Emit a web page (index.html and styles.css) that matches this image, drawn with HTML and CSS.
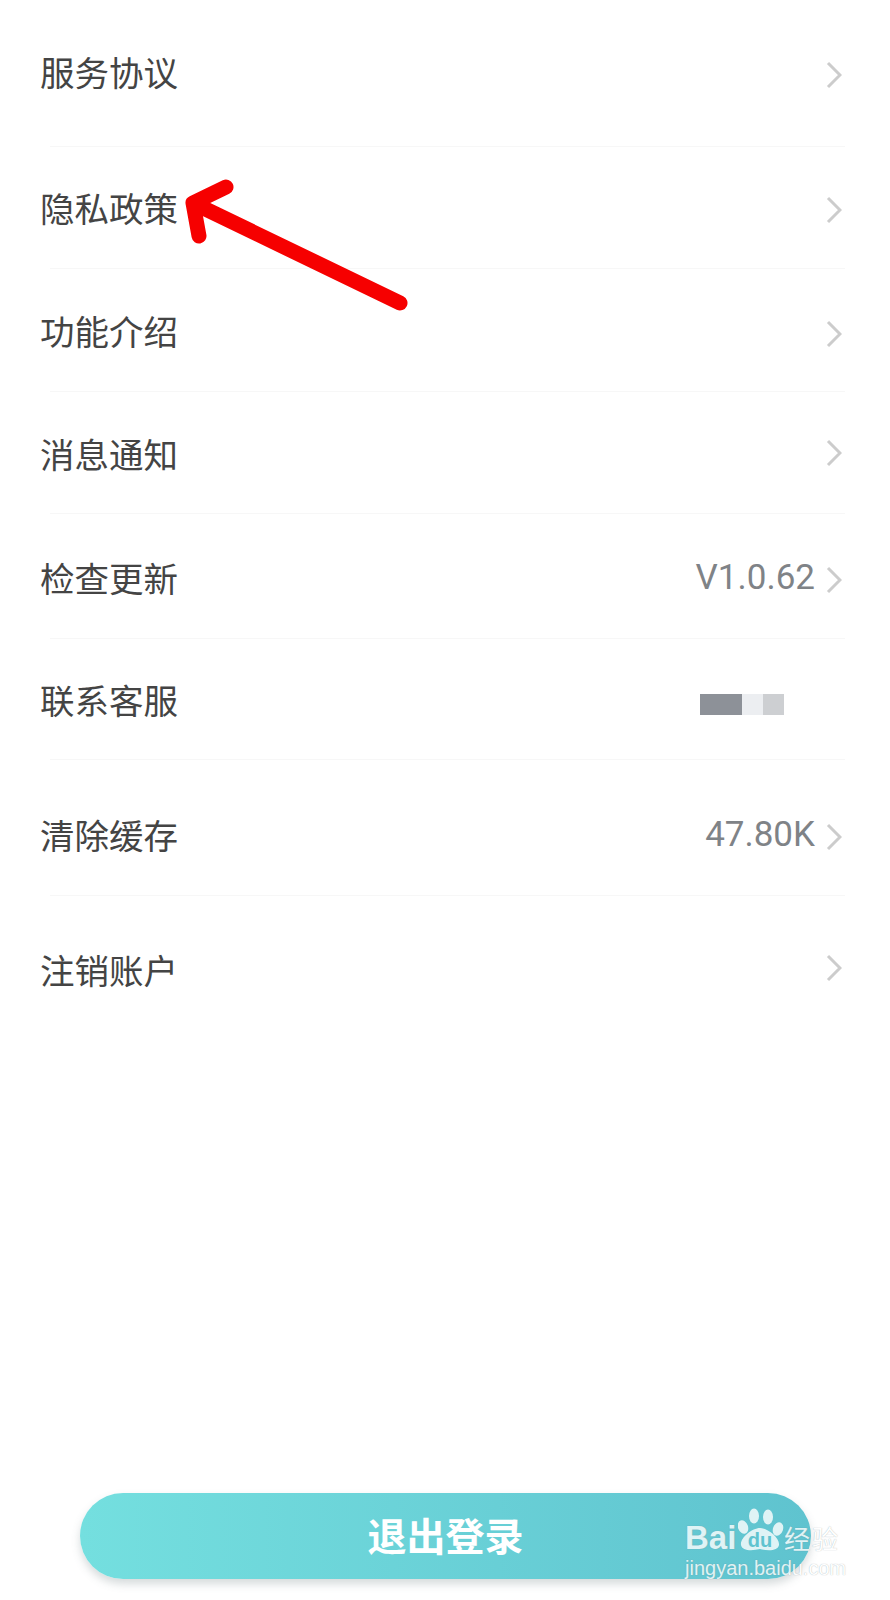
FILE: index.html
```html
<!DOCTYPE html>
<html lang="zh-CN">
<head>
    <meta charset="UTF-8">
    <meta name="viewport" content="width=device-width, initial-scale=1.0">
    <title>设置</title>
    <link rel="stylesheet" href="styles.css">
</head>
<body>

    <!-- Settings list -->
    <div class="list">
        <div class="row row-1">
            <span class="label">服务协议</span>
            <svg class="chevron" viewBox="0 0 16 28"><path d="M2 2L14 14L2 26"/></svg>
        </div>
        <div class="divider"></div>
        <div class="row row-2">
            <span class="label">隐私政策</span>
            <svg class="chevron" viewBox="0 0 16 28"><path d="M2 2L14 14L2 26"/></svg>
        </div>
        <div class="divider"></div>
        <div class="row row-3">
            <span class="label">功能介绍</span>
            <svg class="chevron" viewBox="0 0 16 28"><path d="M2 2L14 14L2 26"/></svg>
        </div>
        <div class="divider"></div>
        <div class="row row-4">
            <span class="label">消息通知</span>
            <svg class="chevron" viewBox="0 0 16 28"><path d="M2 2L14 14L2 26"/></svg>
        </div>
        <div class="divider"></div>
        <div class="row row-5">
            <span class="label">检查更新</span>
            <span class="value">V1.0.62</span>
            <svg class="chevron" viewBox="0 0 16 28"><path d="M2 2L14 14L2 26"/></svg>
        </div>
        <div class="divider"></div>
        <div class="row row-6">
            <span class="label">联系客服</span>
            <div class="mosaic">
                <span class="tile tile-dark"></span>
                <span class="tile tile-pale"></span>
                <span class="tile tile-mid"></span>
            </div>
        </div>
        <div class="divider"></div>
        <div class="row row-7">
            <span class="label">清除缓存</span>
            <span class="value">47.80K</span>
            <svg class="chevron" viewBox="0 0 16 28"><path d="M2 2L14 14L2 26"/></svg>
        </div>
        <div class="divider"></div>
        <div class="row row-8">
            <span class="label">注销账户</span>
            <svg class="chevron" viewBox="0 0 16 28"><path d="M2 2L14 14L2 26"/></svg>
        </div>
    </div>

    <!-- Logout -->
    <div class="footer">
        <button class="logout">退出登录</button>
    </div>

    <!-- Red arrow drawn over the screenshot -->
    <svg class="arrow" viewBox="0 0 240 140">
        <path d="M218 131L11 31M44 15L11 31L17 64"/>
    </svg>

    <!-- Watermark -->
    <div class="watermark">
        <div class="mark-top">
            <span class="mark-bai">Bai</span>
            <svg class="paw" viewBox="0 0 46 44">
                <ellipse cx="5" cy="19" rx="5" ry="7" transform="rotate(-20 5 19)"/>
                <ellipse cx="16" cy="8" rx="5" ry="7.5"/>
                <ellipse cx="30" cy="9" rx="5" ry="7.5"/>
                <ellipse cx="40" cy="21" rx="5" ry="7" transform="rotate(20 40 21)"/>
                <path d="M22 20C30 20 42 30 41 37C40 43 30 43 22 41C14 43 4 43 3 37C2 30 14 20 22 20Z"/>
                <text class="paw-du" x="22" y="39" text-anchor="middle">du</text>
            </svg>
            <span class="mark-cn">经验</span>
        </div>
        <div class="mark-url">jingyan.baidu.com</div>
    </div>

</body>
</html>
```

FILE: styles.css
```css
body {
    font-family: "Noto Sans CJK SC", Roboto, sans-serif;
    background-color: white;
    margin: 0;
    padding: 0;
    min-height: 100vh;
    display: flex;
    flex-direction: column;
    position: relative;
    overflow: hidden;
}

/* Rows */
.row {
    display: flex;
    align-items: center;
    padding-left: 40px;
    padding-right: 48px;
    box-sizing: border-box;
}

.row-1 { height: 146px; }
.row-2 { height: 121px; padding-top: 2px; }
.row-3 { height: 122px; padding-top: 4px; }
.row-4 { height: 121px; padding-top: 4px; }
.row-5 { height: 124px; padding-top: 5px; }
.row-6 { height: 120px; padding-top: 4px; }
.row-7 { height: 135px; padding-top: 16px; }
.row-8 { height: 150px; }

.divider {
    height: 1px;
    margin: 0 45px 0 50px;
    background-color: #f7f7f7;
}

.label {
    font-size: 34.5px;
    line-height: 40px;
    margin-top: -4px;
    color: #444;
    flex-grow: 1;
}

.value {
    font-family: Roboto, sans-serif;
    font-size: 35px;
    margin-top: -2px;
    color: #7f8387;
    margin-right: 11px;
}

.chevron {
    width: 16px;
    height: 28px;
    margin-top: 3px;
    fill: none;
    stroke: #ccc;
    stroke-width: 3;
}

.row-4 .chevron { margin-top: -4px; }
.row-8 .chevron { margin-top: -7px; }

/* Blurred phone number */
.mosaic {
    display: flex;
    margin-top: 6px;
    margin-right: 58px;
}

.tile {
    height: 21px;
    width: 21px;
}

.tile-dark { width: 42px; background-color: #8d9198; }
.tile-pale { background-color: #eceef1; }
.tile-mid { background-color: #cdcfd2; }

/* Logout button */
.footer {
    margin-top: auto;
    padding: 0 79px 21px 80px;
}

.logout {
    display: block;
    width: 100%;
    height: 86px;
    padding: 0 0 4px;
    border: none;
    border-radius: 43px;
    background: linear-gradient(to right, #74dfdf, #5fc3cf);
    box-shadow: 0 5px 8px rgba(90, 110, 115, 0.25);
    color: white;
    font-family: inherit;
    font-size: 39px;
    font-weight: 700;
}

/* Annotation */
.arrow {
    position: absolute;
    left: 182px;
    top: 172px;
    width: 240px;
    height: 140px;
    fill: none;
    stroke: #f60000;
    stroke-width: 15;
    stroke-linecap: round;
    stroke-linejoin: round;
}

/* Watermark */
.watermark {
    position: absolute;
    left: 685px;
    top: 1505px;
    width: 160px;
    color: white;
    opacity: 0.8;
    text-shadow: 0 0 1px rgba(110, 135, 145, 0.8);
}

.mark-top {
    display: flex;
    align-items: flex-end;
    height: 47px;
}

.mark-bai {
    font-family: "Liberation Sans", sans-serif;
    font-size: 33px;
    line-height: 34px;
    font-weight: 700;
    width: 53px;
    margin-bottom: -3px;
}

.paw {
    width: 46px;
    height: 44px;
    flex-shrink: 0;
    fill: white;
}

.paw-du {
    font-family: "Liberation Sans", sans-serif;
    font-size: 20px;
    font-weight: 700;
    fill: #5fc3cf;
    text-shadow: none;
}

.mark-cn {
    font-size: 26px;
    line-height: 34px;
    letter-spacing: 2px;
    margin-bottom: -3px;
    white-space: nowrap;
}

.mark-url {
    font-family: "Liberation Sans", sans-serif;
    font-size: 20px;
    line-height: 26px;
    margin-top: 3px;
    white-space: nowrap;
}
```
